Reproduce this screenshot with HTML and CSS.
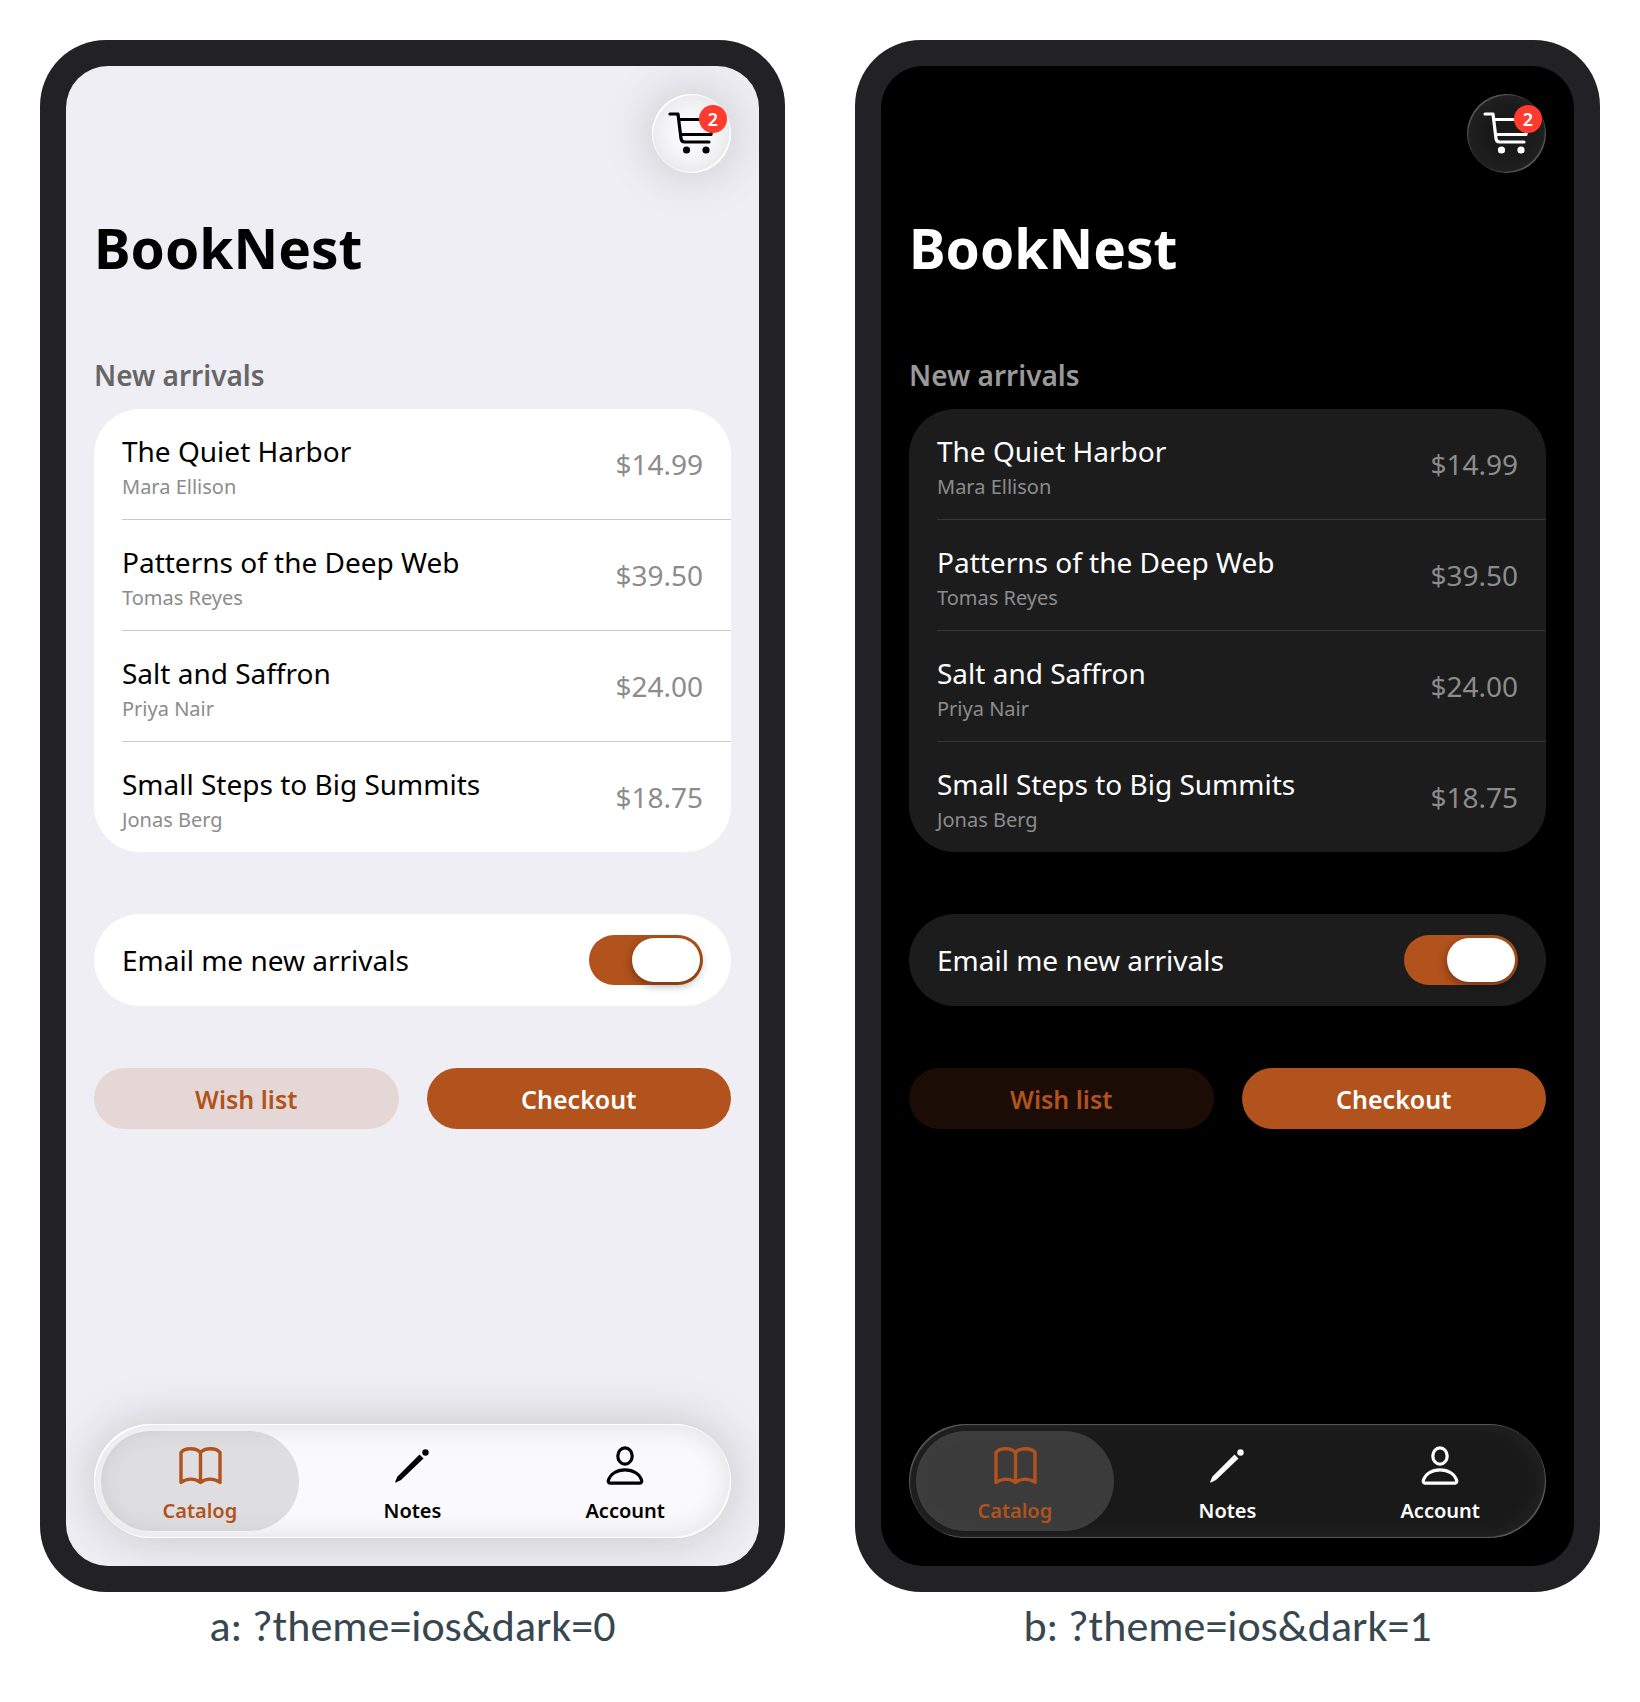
FILE: index.html
```html
<!DOCTYPE html>
<html lang="en">
<head>
  <meta charset="UTF-8">
  <meta name="viewport" content="width=device-width, initial-scale=1.0">
  <title>BookNest</title>
  <link rel="stylesheet" href="styles.css">
</head>
<body>
  <!-- shared icons -->
  <svg class="sprite" aria-hidden="true">
    <symbol id="icon-cart" viewBox="0 0 48 48" fill="none" stroke="currentColor" stroke-width="3.2" stroke-linecap="round" stroke-linejoin="round">
      <path d="M2 4h8l3 24.500q.5 3.500 3.500 3.500H41M11 9.500h34l-2 15H13"/>
      <circle cx="18.500" cy="40" r="3.600" fill="currentColor" stroke="none"/>
      <circle cx="38" cy="40" r="3.600" fill="currentColor" stroke="none"/>
    </symbol>
    <symbol id="icon-book" viewBox="0 0 48 40" fill="none" stroke="currentColor" stroke-width="3.4" stroke-linejoin="round">
      <path d="M24.500 6.500C20 1.500 9 1.500 5 6.500V36.500c6-4.500 14-4.500 19.500 0c5.500-4.500 13.500-4.500 19.500 0V6.500c-4-5-15-5-19.500 0zV36.500"/>
    </symbol>
    <symbol id="icon-pencil" viewBox="0 0 48 40" fill="currentColor">
      <path d="M31.500 8.500l4 4L13 34l-5 2.500q-1 .2-.8-.8L9.500 30.500z"/>
      <circle cx="37.500" cy="6.500" r="3.200"/>
    </symbol>
    <symbol id="icon-person" viewBox="0 0 48 40" fill="none" stroke="currentColor" stroke-width="3.2" stroke-linejoin="round">
      <ellipse cx="24" cy="10" rx="7.200" ry="8.200"/>
      <path d="M9 37.200h30a2 2 0 0 0 1.700-2.500C39 28 32 23.800 24 23.800S9 28 7.300 34.700A2 2 0 0 0 9 37.200z"/>
    </symbol>
  </svg>

  <main class="gallery">
    <figure class="preview">
      <div class="phone">
        <div class="screen">
          <header class="topbar">
            <button class="cart glass" type="button" aria-label="Cart, 2 items">
              <svg class="cart-icon"><use href="#icon-cart"/></svg>
              <span class="badge">2</span>
            </button>
          </header>
          <h1>BookNest</h1>
          <h2>New arrivals</h2>
          <ul class="card book-list">
            <li class="book">
              <div class="book-info"><span class="book-title">The Quiet Harbor</span><span class="author">Mara Ellison</span></div>
              <span class="price">$14.99</span>
            </li>
            <li class="book">
              <div class="book-info"><span class="book-title">Patterns of the Deep Web</span><span class="author">Tomas Reyes</span></div>
              <span class="price">$39.50</span>
            </li>
            <li class="book">
              <div class="book-info"><span class="book-title">Salt and Saffron</span><span class="author">Priya Nair</span></div>
              <span class="price">$24.00</span>
            </li>
            <li class="book">
              <div class="book-info"><span class="book-title">Small Steps to Big Summits</span><span class="author">Jonas Berg</span></div>
              <span class="price">$18.75</span>
            </li>
          </ul>
          <div class="card setting">
            <label for="email-light">Email me new arrivals</label>
            <input class="switch" id="email-light" type="checkbox" role="switch" checked>
          </div>
          <div class="actions">
            <button class="btn btn-tonal" type="button">Wish list</button>
            <button class="btn btn-fill" type="button">Checkout</button>
          </div>
          <nav class="tabbar glass">
            <a class="tab active" href="#catalog"><svg class="tab-icon"><use href="#icon-book"/></svg>Catalog</a>
            <a class="tab" href="#notes"><svg class="tab-icon"><use href="#icon-pencil"/></svg>Notes</a>
            <a class="tab" href="#account"><svg class="tab-icon"><use href="#icon-person"/></svg>Account</a>
          </nav>
        </div>
      </div>
      <figcaption>a: ?theme=ios&amp;dark=0</figcaption>
    </figure>

    <figure class="preview">
      <div class="phone dark">
        <div class="screen">
          <header class="topbar">
            <button class="cart glass" type="button" aria-label="Cart, 2 items">
              <svg class="cart-icon"><use href="#icon-cart"/></svg>
              <span class="badge">2</span>
            </button>
          </header>
          <h1>BookNest</h1>
          <h2>New arrivals</h2>
          <ul class="card book-list">
            <li class="book">
              <div class="book-info"><span class="book-title">The Quiet Harbor</span><span class="author">Mara Ellison</span></div>
              <span class="price">$14.99</span>
            </li>
            <li class="book">
              <div class="book-info"><span class="book-title">Patterns of the Deep Web</span><span class="author">Tomas Reyes</span></div>
              <span class="price">$39.50</span>
            </li>
            <li class="book">
              <div class="book-info"><span class="book-title">Salt and Saffron</span><span class="author">Priya Nair</span></div>
              <span class="price">$24.00</span>
            </li>
            <li class="book">
              <div class="book-info"><span class="book-title">Small Steps to Big Summits</span><span class="author">Jonas Berg</span></div>
              <span class="price">$18.75</span>
            </li>
          </ul>
          <div class="card setting">
            <label for="email-dark">Email me new arrivals</label>
            <input class="switch" id="email-dark" type="checkbox" role="switch" checked>
          </div>
          <div class="actions">
            <button class="btn btn-tonal" type="button">Wish list</button>
            <button class="btn btn-fill" type="button">Checkout</button>
          </div>
          <nav class="tabbar glass">
            <a class="tab active" href="#catalog"><svg class="tab-icon"><use href="#icon-book"/></svg>Catalog</a>
            <a class="tab" href="#notes"><svg class="tab-icon"><use href="#icon-pencil"/></svg>Notes</a>
            <a class="tab" href="#account"><svg class="tab-icon"><use href="#icon-person"/></svg>Account</a>
          </nav>
        </div>
      </div>
      <figcaption>b: ?theme=ios&amp;dark=1</figcaption>
    </figure>
  </main>
</body>
</html>
```
FILE: styles.css
```css
* {
  box-sizing: border-box;
}
body {
  margin: 0;
  background: #fff;
  font-family: 'Segoe UI', 'Noto Sans', sans-serif;
}
.sprite {
  display: none;
}
.gallery {
  display: grid;
  grid-template-columns: 1fr 1fr;
  gap: 70px;
  padding: 40px;
}
.preview {
  margin: 0;
}
figcaption {
  color: #37474f;
  font-family: Calibri, Carlito, 'Lato', sans-serif;
  font-size: 44px;
  line-height: 48px;
  margin-top: 10px;
  text-align: center;
}

.phone {
  --bg: #efeef4;
  --text: #000;
  --muted: #8c8c8c;
  --heading: #666;
  --card: #fff;
  --line: #c8c8c8;
  --accent: #b2521c;
  --tonal: #e5d7d5;
  --glass: #fafafc;
  --glass-inset: #00000018;
  --active: #0000001c;
  --shine: #fff;
  --edge: #ffffff80;
  --shadow: #0000002e;
  background: #222126;
  border-radius: 66px;
  padding: 26px;
}
.phone.dark {
  --bg: #000;
  --text: #fff;
  --heading: #999;
  --card: #1c1c1d;
  --line: #363636;
  --tonal: #1b0d05;
  --glass: #191919;
  --glass-inset: #ffffff0c;
  --active: #ffffff26;
  --shine: #ffffff38;
  --edge: #ffffff10;
}
.screen {
  display: flex;
  flex-direction: column;
  min-height: 1500px;
  padding: 28px;
  border-radius: 42px;
  background: var(--bg);
  color: var(--text);
  overflow: hidden;
}
.topbar {
  display: flex;
  justify-content: flex-end;
}
.glass {
  background: var(--glass);
  box-shadow:
    inset 2px 2px 1px -1px var(--shine),
    inset -2px -2px 1px -1px var(--shine),
    inset 0 0 0 1px var(--edge),
    inset 0 0 26px 4px var(--glass-inset),
    0 0 50px var(--shadow);
}
.cart {
  position: relative;
  display: flex;
  align-items: center;
  justify-content: center;
  width: 79px;
  height: 79px;
  padding: 0;
  border: none;
  border-radius: 50%;
  color: var(--text);
}
.cart-icon {
  width: 48px;
  height: 48px;
}
.badge {
  position: absolute;
  top: 11px;
  right: 4px;
  width: 28px;
  height: 28px;
  border-radius: 50%;
  background: #ff3b30;
  color: #fff;
  font: 600 18px/28px 'Segoe UI', 'Noto Sans', sans-serif;
  text-align: center;
}
h1 {
  margin: 35px 0 0;
  font-size: 55px;
  line-height: 80px;
}
h2 {
  margin: 67px 0 14px;
  color: var(--heading);
  font-size: 28px;
  font-weight: 600;
  line-height: 40px;
}
.card {
  border-radius: 46px;
  background: var(--card);
  font-size: 28px;
}
.book-list {
  margin: 0;
  padding: 0 0 0 28px;
  list-style: none;
}
.book {
  box-sizing: content-box;
  display: flex;
  align-items: center;
  justify-content: space-between;
  height: 110px;
  padding-right: 28px;
}
.book + .book {
  border-top: 1px solid var(--line);
}
.book-info {
  display: flex;
  flex-direction: column;
  padding-top: 6px;
}
.book-title {
  line-height: 40px;
}
.author {
  color: var(--muted);
  font-size: 20px;
  line-height: 32px;
}
.price {
  color: var(--muted);
}
.setting {
  display: flex;
  align-items: center;
  justify-content: space-between;
  margin-top: 62px;
  padding: 21px 28px;
}
.switch {
  appearance: none;
  display: flex;
  justify-content: flex-end;
  width: 114px;
  height: 50px;
  margin: 0;
  padding: 3px;
  border-radius: 25px;
  background: var(--accent);
}
.switch::before {
  content: '';
  width: 68px;
  border-radius: 22px;
  background: #fff;
  box-shadow: 0 3px 10px #00000060;
}
.switch:not(:checked) {
  justify-content: flex-start;
  background: var(--muted);
}
.actions {
  display: grid;
  grid-template-columns: 1fr 1fr;
  gap: 28px;
  margin-top: 62px;
}
.btn {
  height: 61px;
  border: none;
  border-radius: 31px;
  font: 600 25px 'Segoe UI', 'Noto Sans', sans-serif;
}
.btn-tonal {
  background: var(--tonal);
  color: var(--accent);
}
.btn-fill {
  background: var(--accent);
  color: #fff;
}
.tabbar {
  display: grid;
  grid-template-columns: repeat(3, 1fr);
  gap: 15px;
  margin-top: auto;
  padding: 7px;
  border-radius: 57px;
}
.tab {
  display: flex;
  flex-direction: column;
  align-items: center;
  height: 100px;
  padding-top: 15px;
  border-radius: 50px;
  color: var(--text);
  font-size: 20px;
  font-weight: 600;
  line-height: 28px;
  text-decoration: none;
}
.tab-icon {
  width: 48px;
  height: 40px;
  margin-bottom: 11px;
}
.tab.active {
  background: var(--active);
  color: var(--accent);
}
```
